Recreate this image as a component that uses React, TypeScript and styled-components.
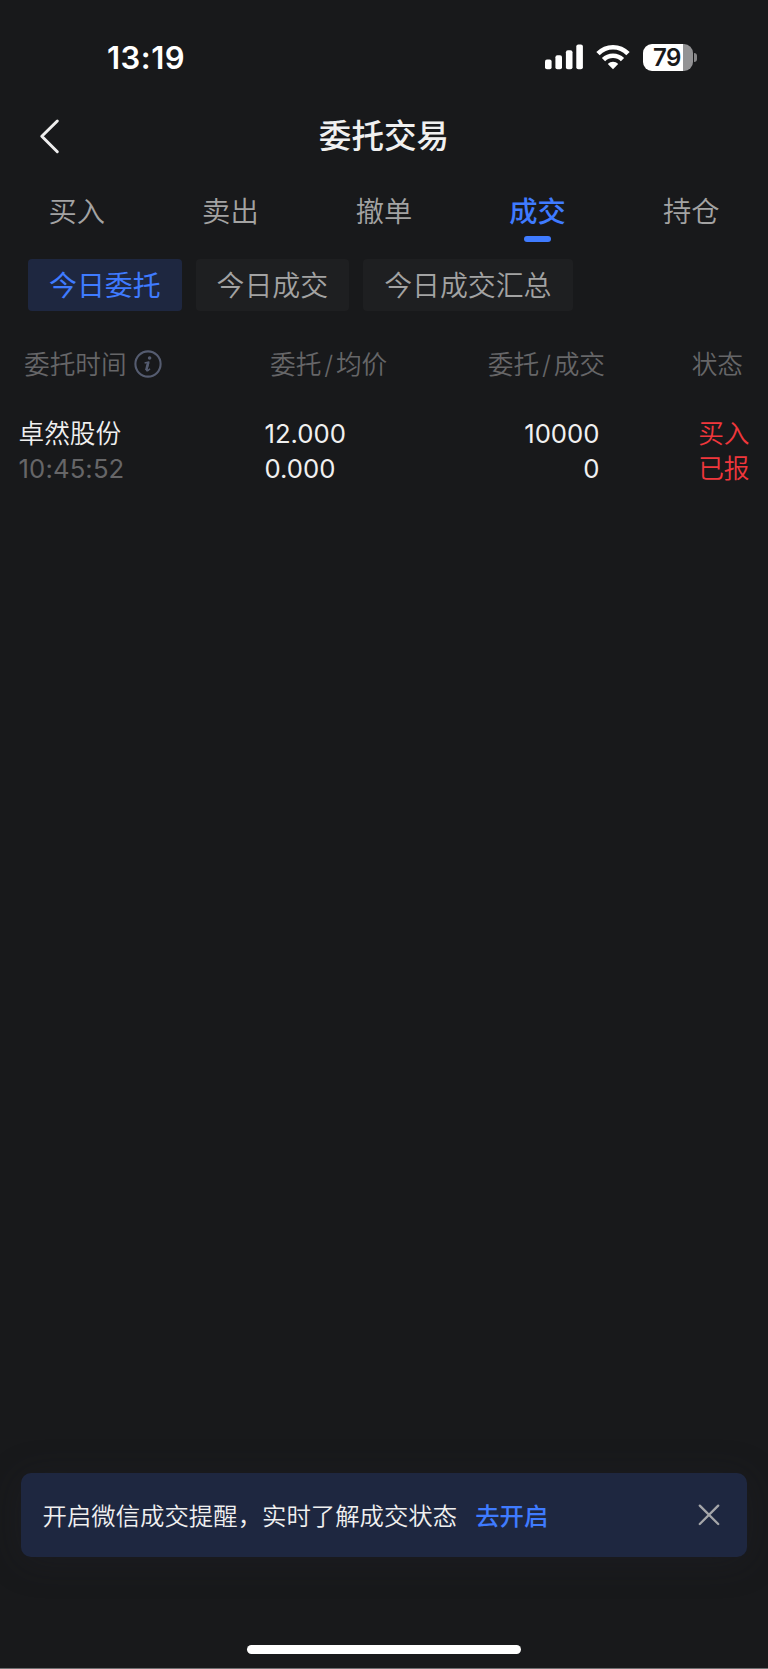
import React from 'react';
import styled, { createGlobalStyle } from 'styled-components';

const colors = {
  bg: '#18191b',
  blue: '#3f7bff',
  navy: '#1e2740',
  chip: '#1e1f21',
  text: '#f0f0f0',
  muted: '#a3a3a3',
  dim: '#666668',
  red: '#f0373c',
};

const GlobalStyle = createGlobalStyle`
  * { box-sizing: border-box; }
  body { margin: 0; background: ${colors.bg}; }
`;

const Screen = styled.div`
  display: flex;
  flex-direction: column;
  width: 768px;
  height: 1669px;
  background: ${colors.bg};
  border-bottom: 1px solid #6f7071;
  color: ${colors.text};
  font-family: Inter, 'Noto Sans CJK SC', sans-serif;
  white-space: nowrap;
`;

const StatusBar = styled.header`
  display: flex;
  align-items: center;
  height: 112px;
  padding: 2px 71px 0 107px;
  color: #fff;
`;

const Time = styled.div`
  flex: 1;
  padding-top: 2px;
  font-size: 31px;
  font-weight: 600;
  line-height: 40px;
  letter-spacing: 0.5px;
`;

const StatusIcons = styled.div`
  display: flex;
  align-items: center;
  gap: 13px;
  svg { display: block; }
`;

const Battery = styled.div`
  display: flex;
  align-items: center;
  gap: 1.5px;
`;

const BatteryBody = styled.div`
  display: flex;
  align-items: center;
  justify-content: center;
  width: 50px;
  height: 27px;
  padding-right: 1px;
  border-radius: 9px;
  background: linear-gradient(to right, #fff 79%, #929294 79%);
  color: ${colors.bg};
  font-size: 24px;
  font-weight: 600;
  line-height: 27px;
  letter-spacing: -0.4px;
`;

const BatteryTip = styled.div`
  width: 3px;
  height: 9px;
  border-radius: 0 4px 4px 0;
  background: #858587;
`;

const TitleBar = styled.div`
  display: grid;
  grid-template-columns: 80px 1fr 80px;
  align-items: center;
  height: 48px;
`;

const BackButton = styled.button`
  display: flex;
  margin: 0;
  padding: 0 0 0 39px;
  border: 0;
  background: none;
`;

const Title = styled.h1`
  margin: 0;
  text-align: center;
  font-size: 32.6px;
  font-weight: 500;
  line-height: 48px;
`;

const Tabs = styled.nav`
  display: grid;
  grid-template-columns: repeat(5, 1fr);
  height: 99px;
  padding-top: 32px;
`;

const Tab = styled.div<{ $active?: boolean }>`
  display: flex;
  flex-direction: column;
  align-items: center;
  font-size: 28.3px;
  line-height: 40px;
  font-weight: ${p => (p.$active ? 500 : 350)};
  color: ${p => (p.$active ? colors.blue : colors.muted)};
  &::after {
    content: '';
    width: 27px;
    height: 6px;
    margin-top: 4px;
    border-radius: 3px;
    background: ${p => (p.$active ? colors.blue : 'transparent')};
  }
`;

const Chips = styled.div`
  display: flex;
  gap: 14px;
  padding: 0 28px;
`;

const Chip = styled.div<{ $active?: boolean }>`
  height: 52px;
  padding: 0 21px;
  border-radius: 4px;
  font-size: 27.9px;
  line-height: 54px;
  font-weight: ${p => (p.$active ? 400 : 350)};
  color: ${p => (p.$active ? colors.blue : colors.muted)};
  background: ${p => (p.$active ? colors.navy : colors.chip)};
`;

const GridRow = styled.div`
  display: grid;
  grid-template-columns: 246px 160px 175px 150px;
  font-weight: 350;
`;

const TableHead = styled(GridRow)`
  margin: 35px 0 0 24px;
  font-size: 25.7px;
  line-height: 37px;
  color: ${colors.dim};
`;

const TableRow = styled(GridRow)`
  margin: 33px 0 0 18.5px;
  font-size: 25.7px;
  line-height: 35px;
`;

const Cell = styled.div<{ $right?: boolean; $color?: string }>`
  text-align: ${p => (p.$right ? 'right' : 'left')};
  color: ${p => p.$color ?? 'inherit'};
`;

const NumberCell = styled(Cell)`
  font-weight: 400;
`;

const TimeHead = styled(Cell)`
  display: flex;
  align-items: center;
  gap: 7px;
  svg { margin-bottom: 2px; }
`;

const Slash = styled.span`
  margin: 0 2.8px;
`;

const HeadStatus = styled.span`
  margin-right: 12px;
`;

const OrderTime = styled.div`
  font-weight: 400;
  letter-spacing: 0.12px;
  color: ${colors.dim};
`;

const Notice = styled.aside`
  display: flex;
  align-items: center;
  height: 84px;
  margin: auto 21px 88px;
  padding: 2px 27px 0 21.5px;
  border-radius: 10px;
  background: ${colors.navy};
  box-shadow: 0 4px 36px rgba(35, 38, 48, 0.3);
  font-size: 24.4px;
  font-weight: 350;
  line-height: 36px;
`;

const NoticeLink = styled.a`
  margin-left: 18px;
  font-weight: 500;
  color: ${colors.blue};
`;

const CloseButton = styled.button`
  display: flex;
  margin: 0 0 2px auto;
  padding: 0;
  border: 0;
  background: none;
`;

const HomeIndicator = styled.div`
  width: 274px;
  height: 9px;
  margin: 0 auto 14px;
  border-radius: 5px;
  background: #fff;
`;

const SignalIcon = () => (
  <svg width="38" height="26" viewBox="0 0 38 26" fill="#fff">
    <rect x="0" y="15.6" width="6.6" height="9.7" rx="2" />
    <rect x="10.4" y="11.3" width="6.6" height="14" rx="2" />
    <rect x="20.9" y="6.3" width="6.6" height="19" rx="2" />
    <rect x="31.3" y="0.6" width="6.6" height="24.7" rx="2" />
  </svg>
);

const WifiIcon = () => (
  <svg width="34" height="26" viewBox="0 0 34 26" fill="none" stroke="#fff">
    <path d="M2 9.7C10.3 1.1 23.7 1.1 32 9.7" strokeWidth="4.7" />
    <path d="M7.5 15.6C12.7 10.4 21.3 10.4 26.5 15.6" strokeWidth="4.6" />
    <path d="M11.8 20C14.8 17 19.2 17 22.2 20L17 25.2Z" fill="#fff" stroke="none" />
  </svg>
);

const BackIcon = () => (
  <svg width="21" height="36" viewBox="0 0 21 36" fill="none" stroke="#eee" strokeWidth="3" strokeLinecap="round" strokeLinejoin="round">
    <path d="M18.3 3L2.8 18.2L18.3 33.7" />
  </svg>
);

const InfoIcon = () => (
  <svg width="28" height="28" viewBox="0 0 28 28" fill="none" stroke="#555c70">
    <circle cx="14" cy="14" r="12.6" strokeWidth="2.1" />
    <circle cx="15.6" cy="8" r="1.8" fill="#555c70" stroke="none" />
    <path d="M10.6 12.9L14.8 12L12.7 19.3Q12.3 21.3 13.9 20.6L16 18.8" strokeWidth="1.5" strokeLinejoin="round" />
    <path d="M14.1 12.6L12.3 20.2" strokeWidth="2.6" />
  </svg>
);

const CloseIcon = () => (
  <svg width="22" height="22" viewBox="0 0 22 22" stroke="#a5a6a9" strokeWidth="2.3" strokeLinecap="round">
    <path d="M1.8 1.6L20.2 20M20.2 1.6L1.8 20" />
  </svg>
);

const tabs = ['买入', '卖出', '撤单', '成交', '持仓'];
const chips = ['今日委托', '今日成交', '今日成交汇总'];

export default function App() {
  return (
    <>
      <GlobalStyle />
      <Screen>
        <StatusBar>
          <Time>13:19</Time>
          <StatusIcons>
            <SignalIcon />
            <WifiIcon />
            <Battery>
              <BatteryBody>79</BatteryBody>
              <BatteryTip />
            </Battery>
          </StatusIcons>
        </StatusBar>
        <TitleBar>
          <BackButton aria-label="返回"><BackIcon /></BackButton>
          <Title>委托交易</Title>
        </TitleBar>
        <Tabs>
          {tabs.map(t => <Tab key={t} $active={t === '成交'}>{t}</Tab>)}
        </Tabs>
        <Chips>
          {chips.map(c => <Chip key={c} $active={c === '今日委托'}>{c}</Chip>)}
        </Chips>
        <TableHead>
          <TimeHead>委托时间<InfoIcon /></TimeHead>
          <Cell>委托<Slash>/</Slash>均价</Cell>
          <Cell $right>委托<Slash>/</Slash>成交</Cell>
          <Cell $right><HeadStatus>状态</HeadStatus></Cell>
        </TableHead>
        <TableRow>
          <Cell>卓然股份<OrderTime>10:45:52</OrderTime></Cell>
          <NumberCell>12.000<br />0.000</NumberCell>
          <NumberCell $right>10000<br />0</NumberCell>
          <Cell $right $color={colors.red}>买入<br />已报</Cell>
        </TableRow>
        <Notice>
          <span>开启微信成交提醒，实时了解成交状态</span>
          <NoticeLink>去开启</NoticeLink>
          <CloseButton aria-label="关闭"><CloseIcon /></CloseButton>
        </Notice>
        <HomeIndicator />
      </Screen>
    </>
  );
}
